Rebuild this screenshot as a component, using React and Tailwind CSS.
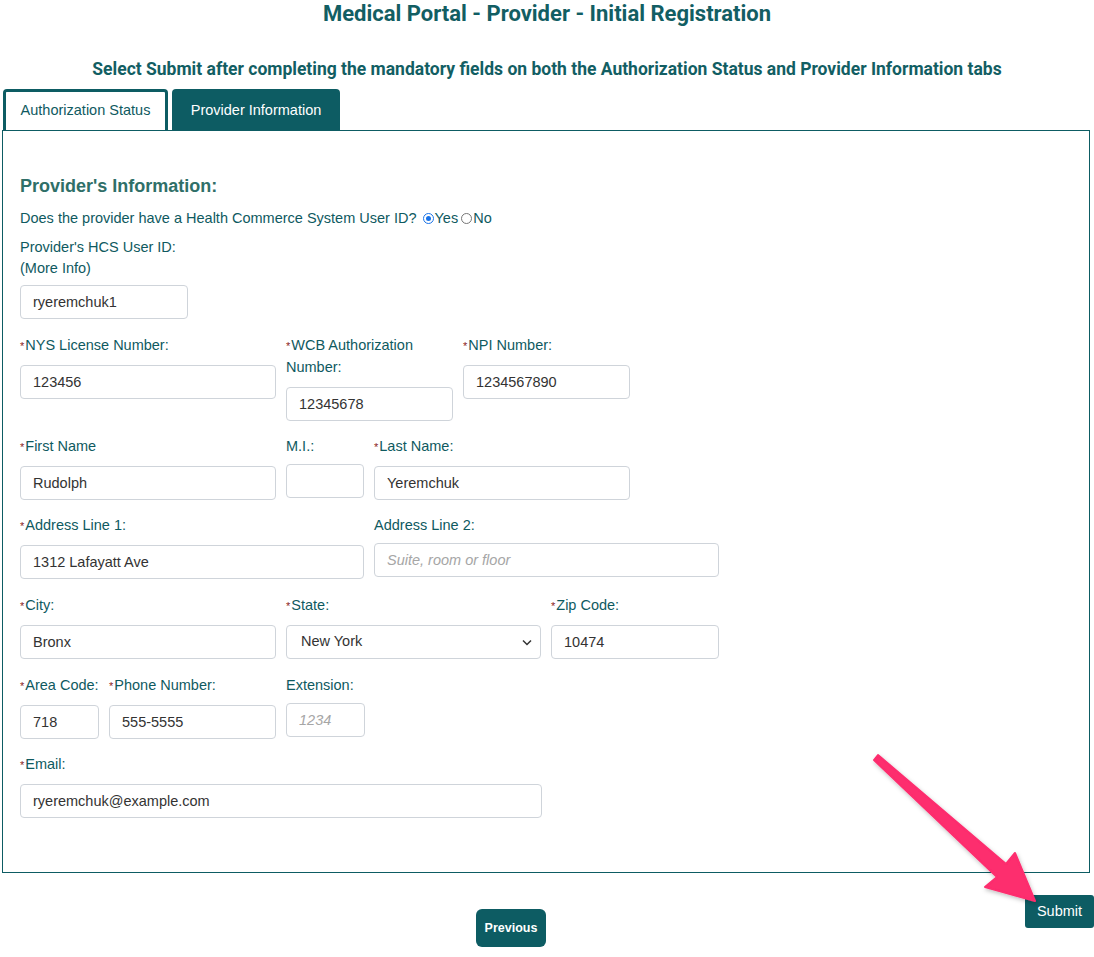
import React from "react";

const Label = ({ children, required, className = "" }) => (
  <div className={`text-[14.5px] leading-[22px] text-[#0f5a5f] mb-[9px] whitespace-nowrap ${className}`}>
    {required && <span className="text-[#8b1a1a] text-[11px] leading-none mr-[1px]">*</span>}
    {children}
  </div>
);

const Input = ({ value, placeholder, className = "" }) => (
  <input
    readOnly
    defaultValue={value}
    placeholder={placeholder}
    className={`block h-[34px] rounded-[4px] border border-[#cfd4da] bg-white px-3 text-[14.5px] text-[#333] placeholder:italic placeholder:text-[#a6a6a6] outline-none ${className}`}
  />
);

const Field = ({ label, required, value, placeholder, width, inputClass = "", labelClass = "" }) => (
  <div className={width}>
    <Label required={required} className={labelClass}>{label}</Label>
    <Input value={value} placeholder={placeholder} className={`w-full ${inputClass}`} />
  </div>
);

export default function App() {
  return (
    <div className="relative w-[1094px] min-h-[957px] bg-white font-['Liberation_Sans',Arial,sans-serif] text-[#0f5a5f]">
      <h1 className="text-center text-[22px] leading-[28px] font-bold text-[#125e63] font-['Roboto',sans-serif]">
        Medical Portal - Provider - Initial Registration
      </h1>
      <p className="mt-[29px] text-center text-[17.5px] leading-[24px] font-bold text-[#125e63] font-['Roboto',sans-serif]">
        Select Submit after completing the mandatory fields on both the Authorization Status and Provider Information tabs
      </p>

      <div className="mt-[8px] flex pl-[3px] gap-[4px]">
        <div className="flex h-[41px] w-[165px] items-center justify-center rounded-t-[4px] border-[3px] border-b-0 border-[#0d5c63] bg-white text-[14.5px] text-[#0f5a5f]">
          Authorization Status
        </div>
        <div className="flex h-[41px] w-[168px] items-center justify-center rounded-t-[4px] bg-[#0d5c63] pt-[3px] text-[14.5px] text-white">
          Provider Information
        </div>
      </div>

      <div className="ml-[2px] w-[1088px] border border-[#0d5c63] pl-[17px] pt-[43px] pb-[54px]">
        <h2 className="text-[18px] leading-[24px] font-bold text-[#2f6f68]">Provider's Information:</h2>
        <div className="mt-[10px] flex items-center text-[14.5px] leading-[20px] text-[#0f5a5f]">
          <span>Does the provider have a Health Commerce System User ID?</span>
          <span className="ml-[6px] inline-flex items-center">
            <span className="inline-block h-[11px] w-[11px] rounded-full border border-[#1a73e8] bg-white p-[2px]">
              <span className="block h-full w-full rounded-full bg-[#1a73e8]" />
            </span>
            <span className="ml-[1px]">Yes</span>
          </span>
          <span className="ml-[3px] inline-flex items-center">
            <span className="inline-block h-[11px] w-[11px] rounded-full border border-[#767676] bg-white" />
            <span className="ml-[1px]">No</span>
          </span>
        </div>
        <div className="mt-[9px] text-[14.5px] leading-[21px]">Provider's HCS User ID:</div>
        <div className="text-[14.5px] leading-[21px]">(More Info)</div>
        <Input value="ryeremchuk1" className="mt-[6px] w-[168px]" />

        <div className="mt-[15px] flex items-start gap-[10px]">
          <Field required label="NYS License Number:" value="123456" width="w-[256px]" />
          <Field required label={<>WCB Authorization<br />Number:</>} value="12345678" width="w-[167px]" />
          <Field required label="NPI Number:" value="1234567890" width="w-[167px]" />
        </div>

        <div className="mt-[14px] flex items-start gap-[10px]">
          <Field required label="First Name" value="Rudolph" width="w-[256px]" />
          <Field label="M.I.:" value="" width="w-[78px]" labelClass="!mb-[7px]" />
          <Field required label="Last Name:" value="Yeremchuk" width="w-[256px]" />
        </div>

        <div className="mt-[14px] flex items-start gap-[10px]">
          <Field required label="Address Line 1:" value="1312 Lafayatt Ave" width="w-[344px]" />
          <Field label="Address Line 2:" placeholder="Suite, room or floor" width="w-[345px]" labelClass="!mb-[7px]" />
        </div>

        <div className="mt-[15px] flex items-start gap-[10px]">
          <Field required label="City:" value="Bronx" width="w-[256px]" />
          <div className="w-[255px]">
            <Label required>State:</Label>
            <div className="relative">
              <select
                defaultValue="NY"
                className="block h-[34px] w-full appearance-none rounded-[4px] border border-[#cfd4da] bg-white pl-[14px] text-[14.5px] text-[#333] outline-none"
              >
                <option value="NY">New York</option>
              </select>
              <svg className="pointer-events-none absolute right-[9px] top-[14px]" width="10" height="7" viewBox="0 0 10 7">
                <path d="M1 1.5 L5 5.5 L9 1.5" fill="none" stroke="#333" strokeWidth="1.5" />
              </svg>
            </div>
          </div>
          <Field required label="Zip Code:" value="10474" width="w-[168px]" />
        </div>

        <div className="mt-[15px] flex items-start gap-[10px]">
          <Field required label="Area Code:" value="718" width="w-[79px]" />
          <Field required label="Phone Number:" value="555-5555" width="w-[167px]" />
          <Field label="Extension:" placeholder="1234" width="w-[79px]" labelClass="!mb-[7px]" />
        </div>

        <div className="mt-[14px]">
          <Field required label="Email:" value="ryeremchuk@example.com" width="w-[522px]" />
        </div>
      </div>

      <div className="flex items-start">
        <div className="flex flex-1 justify-center pt-[36px] pr-[3px]">
          <button className="h-[38px] w-[70px] rounded-[6px] bg-[#0d5c63] text-[12.5px] font-bold text-white">
            Previous
          </button>
        </div>
        <button className="mt-[22px] h-[33px] w-[69px] rounded-[3px] bg-[#0d5c63] text-[14.5px] text-white">
          Submit
        </button>
      </div>

      <svg className="pointer-events-none absolute left-0 top-0" width="1094" height="957" viewBox="0 0 1094 957">
        <defs>
          <filter id="sh" x="-20%" y="-20%" width="140%" height="140%">
            <feDropShadow dx="1" dy="2" stdDeviation="2" floodColor="#000" floodOpacity="0.25" />
          </filter>
        </defs>
        <g filter="url(#sh)">
          <polygon
            points="874,760 878,755 1006,864 1015,853 1035,901 985,887 997,877"
            fill="#fd2d6e"
            stroke="#fd2d6e"
            strokeWidth="2"
            strokeLinejoin="round"
          />
        </g>
      </svg>
    </div>
  );
}
